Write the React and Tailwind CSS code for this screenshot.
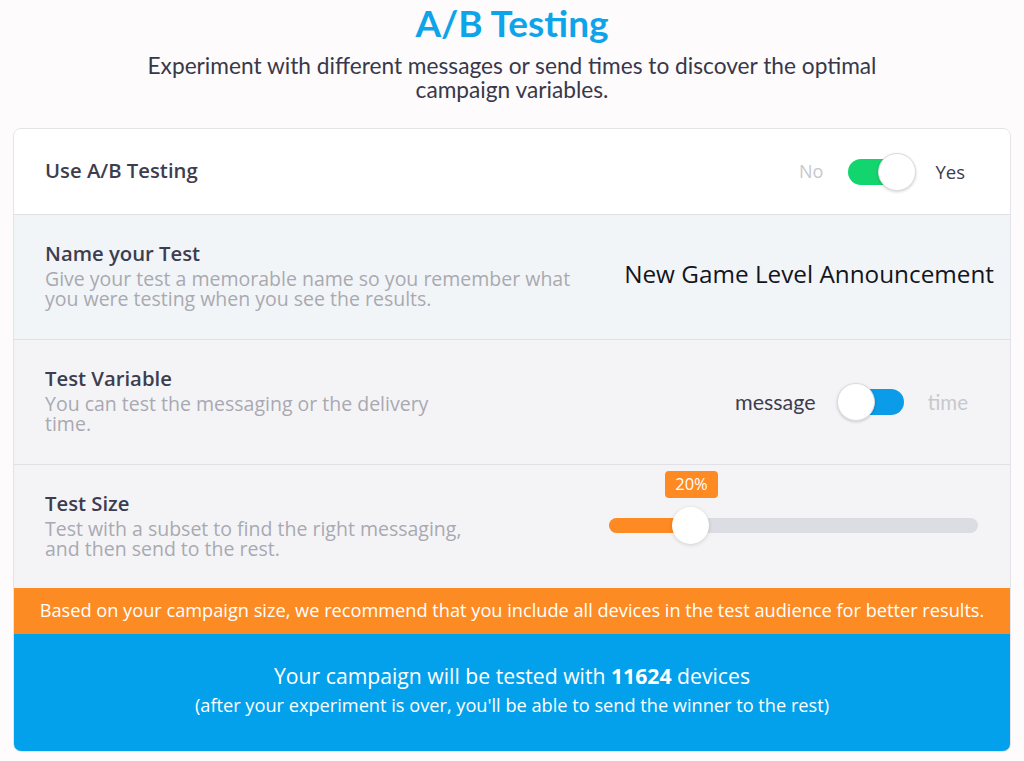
import React from 'react';

const sans = { fontFamily: '"Open Sans", "Noto Sans", sans-serif' };
const lato = { fontFamily: 'Lato, sans-serif' };

const Toggle = ({ on, color, trackClass }) => (
  <div className={`relative h-[26px] rounded-full ${color} ${trackClass || ''}`}>
    <div
      className={`absolute top-1/2 -translate-y-1/2 h-[38px] w-[38px] rounded-full bg-white border border-[#dcdce0] shadow-[0_1px_3px_rgba(0,0,0,0.18)] ${
        on ? 'right-[-4px]' : 'left-[-1px]'
      }`}
    />
  </div>
);

const RowText = ({ title, desc, width }) => (
  <div className={width}>
    <div className="text-[20.3px] font-semibold leading-[24px] text-[#3d3d4f]">{title}</div>
    {desc && <div className="mt-[4px] text-[19.5px] leading-[20px] text-[#a9a9b1]">{desc}</div>}
  </div>
);

export default function App() {
  return (
    <div className="min-h-[761px] w-[1024px] bg-[#fdfbfc] pt-[1px]" style={sans}>
      {/* Header */}
      <div className="text-center" style={lato}>
        <h1 className="text-[37px] font-bold leading-[44px] text-[#0ea4ea]">A/B Testing</h1>
        <p className="mx-auto mt-[9px] w-[780px] text-[22.7px] leading-[24px] text-[#38384a]">
          Experiment with different messages or send times to discover the optimal campaign variables.
        </p>
      </div>

      {/* Card */}
      <div className="mx-[13px] mt-[26px] overflow-hidden rounded-[8px] border border-[#e3e3e8]">
        {/* Use A/B Testing */}
        <div className="flex h-[85px] items-center justify-between bg-white pb-[3px] pl-[31px] pr-[45px]">
          <RowText title="Use A/B Testing" />
          <div className="flex items-center pt-[3px]">
            <span className="text-[18px] text-[#c8c8cc]">No</span>
            <Toggle on color="bg-[#12d56e]" trackClass="ml-[25px] mr-[23px] w-[64px]" />
            <span className="text-[18.5px] text-[#3d3d4f]">Yes</span>
          </div>
        </div>

        {/* Name your Test */}
        <div className="flex h-[125px] items-center justify-between border-t border-[#e0e0e6] bg-[#f2f5f7] pb-[4px] pl-[31px] pr-[16px]">
          <RowText
            title="Name your Test"
            desc="Give your test a memorable name so you remember what you were testing when you see the results."
            width="w-[545px]"
          />
          <div className="pb-[1px] text-[24.3px] text-[#14141c]">New Game Level Announcement</div>
        </div>

        {/* Test Variable */}
        <div className="flex h-[125px] items-center justify-between border-t border-[#e0e0e6] bg-[#f4f4f7] pb-[4px] pl-[31px] pr-[42px]">
          <RowText
            title="Test Variable"
            desc="You can test the messaging or the delivery time."
            width="w-[410px]"
          />
          <div className="flex items-center pt-[4px]" style={lato}>
            <span className="text-[21.5px] text-[#3d3d4f]">message</span>
            <Toggle color="bg-[#0a9be9]" trackClass="ml-[22px] mr-[24px] w-[66px]" />
            <span className="text-[20.5px] text-[#c8c8cc]">time</span>
          </div>
        </div>

        {/* Test Size */}
        <div className="flex h-[124px] items-center justify-between border-t border-[#e0e0e6] bg-[#f4f4f7] pb-[4px] pl-[31px] pr-[32px]">
          <RowText
            title="Test Size"
            desc="Test with a subset to find the right messaging, and then send to the rest."
            width="w-[440px]"
          />
          <div className="relative mt-[-31px] h-[76px] w-[369px]">
            <div className="absolute left-[56px] top-0 flex h-[27px] w-[53px] items-center justify-center rounded-[4px] bg-[#fd8a22] text-[16.5px] text-white">
              20%
            </div>
            <div className="absolute left-0 right-0 top-[47px] h-[15px] rounded-full bg-[#dcdce3]">
              <div className="h-full w-[82px] rounded-full bg-[#fd8a22]" />
            </div>
            <div className="absolute left-[63px] top-[36px] h-[37px] w-[37px] rounded-full bg-white shadow-[0_1px_4px_rgba(0,0,0,0.15)]" />
          </div>
        </div>

        {/* Orange banner */}
        <div className="flex h-[46px] items-center justify-center bg-[#fd8b24] text-[18.2px] text-white">
          Based on your campaign size, we recommend that you include all devices in the test audience for better results.
        </div>

        {/* Blue summary */}
        <div className="flex h-[117px] flex-col items-center justify-center bg-[#03a1eb] pb-[6px] text-white">
          <div className="text-[21.2px] leading-[28px]">
            Your campaign will be tested with <span className="font-bold">11624</span> devices
          </div>
          <div className="mt-[3px] text-[18.2px] leading-[24px]">
            (after your experiment is over, you'll be able to send the winner to the rest)
          </div>
        </div>
      </div>
    </div>
  );
}
